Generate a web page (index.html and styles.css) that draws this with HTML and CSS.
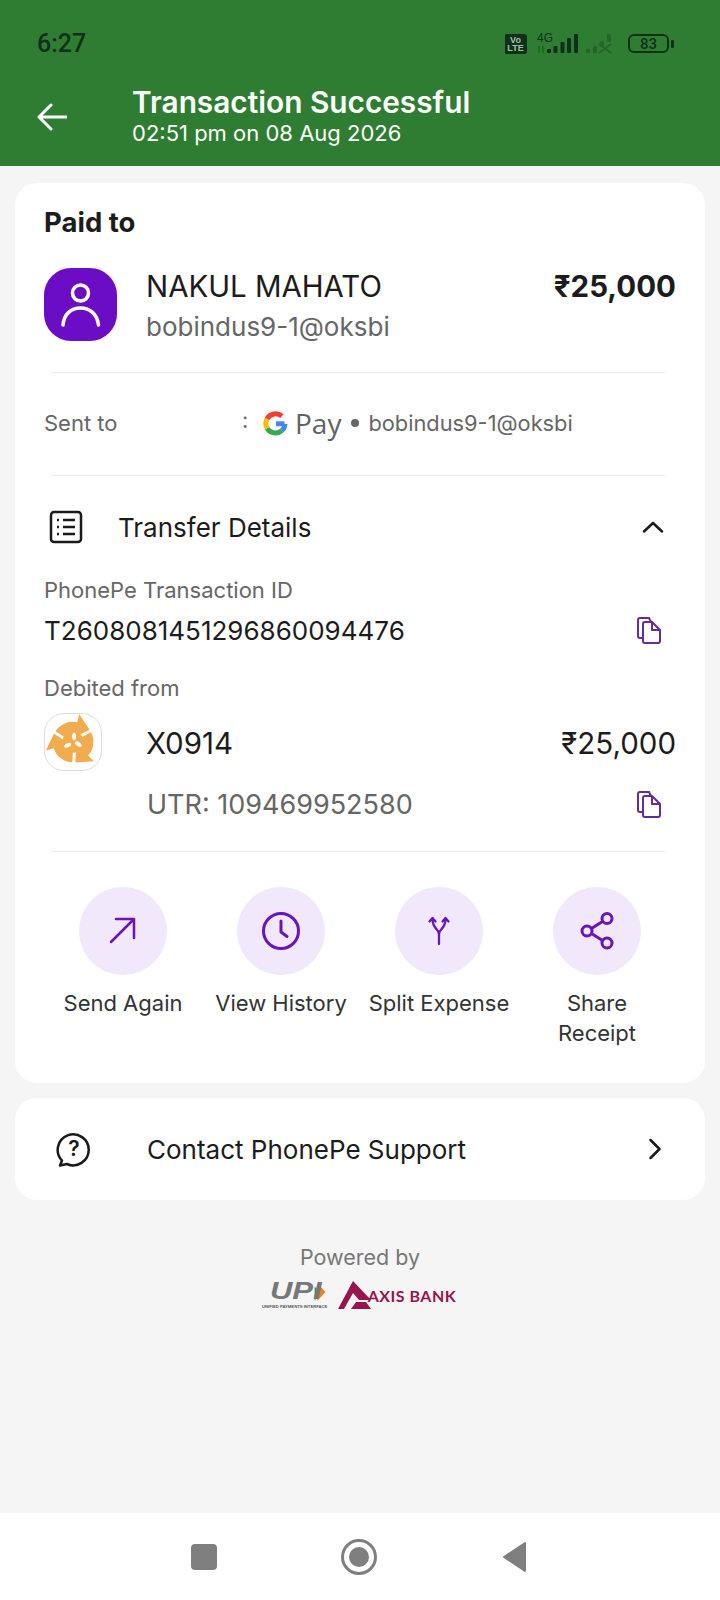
FILE: index.html
```html
<!DOCTYPE html>
<html lang="en">
<head>
    <meta charset="utf-8">
    <meta name="viewport" content="width=device-width, initial-scale=1">
    <title>Transaction Successful</title>
    <link rel="stylesheet" href="styles.css">
</head>
<body>
    <header class="top">
        <div class="status">
            <span class="time">6:27</span>
            <svg class="status-icons" width="170" height="24" viewBox="0 0 170 24">
                <rect x="-1" y="3" width="23" height="20" rx="3" fill="#10301a"/>
                <text x="10.500" y="11.500" class="volte">Vo</text>
                <text x="10.500" y="20" class="volte">LTE</text>
                <text x="32" y="11" class="net">4G</text>
                <g fill="#10301a">
                    <rect x="42" y="18" width="4" height="4" rx="1"/>
                    <rect x="48.500" y="15" width="4" height="7" rx="1"/>
                    <rect x="55.500" y="11" width="4" height="11" rx="1"/>
                    <rect x="62" y="7" width="4" height="15" rx="1"/>
                    <rect x="69" y="3" width="4" height="19" rx="1"/>
                </g>
                <g fill="#10301a" opacity="0.3">
                    <rect x="33" y="15" width="2" height="7"/>
                    <rect x="37" y="15" width="2" height="7"/>
                    <rect x="81" y="18" width="4" height="4" rx="1"/>
                    <rect x="88" y="15" width="4" height="7" rx="1"/>
                    <rect x="95" y="10" width="4" height="6" rx="1"/>
                    <rect x="102" y="3" width="4" height="8" rx="1"/>
                    <path d="M94 13l12 9M106 13l-12 9" stroke="#10301a" stroke-width="2"/>
                </g>
                <rect x="124" y="4" width="39" height="17" rx="5" fill="none" stroke="#10301a" stroke-width="2"/>
                <rect x="166" y="9" width="3" height="8" rx="1" fill="#10301a"/>
                <text x="143.500" y="18" class="level">83</text>
            </svg>
        </div>
        <div class="appbar">
            <svg class="back" width="30" height="28" viewBox="0 0 30 28">
                <path d="M29 14H2M14 2L2 14l12 12" fill="none" stroke="#fff" stroke-width="3" stroke-linecap="round" stroke-linejoin="round"/>
            </svg>
            <div>
                <div class="title">Transaction Successful</div>
                <div class="subtitle">02:51 pm on 08 Aug 2026</div>
            </div>
        </div>
    </header>

    <main class="content">
        <section class="card">
            <h2 class="paid-to">Paid to</h2>

            <div class="payee">
                <div class="avatar">
                    <svg width="73" height="73" viewBox="0 0 73 73">
                        <circle cx="36.500" cy="25" r="8" fill="none" stroke="#fff" stroke-width="3.500"/>
                        <path d="M19 57c1-11 8-17 17.500-17S53 46 54.500 57" fill="none" stroke="#fff" stroke-width="3.500" stroke-linecap="round"/>
                    </svg>
                </div>
                <div class="payee-info">
                    <div class="name">NAKUL MAHATO</div>
                    <div class="handle">bobindus9-1@oksbi</div>
                </div>
                <div class="amount">₹25,000</div>
            </div>

            <hr class="line line-payee">

            <div class="sent">
                <span class="sent-label">Sent to</span>
                <span class="colon">:</span>
                <svg class="g-logo" width="27" height="27" viewBox="0 0 27 27">
                    <path d="M22.500 13.800H14" fill="none" stroke="#4285f4" stroke-width="5"/>
                    <path d="M23 13.800a9.800 9.800 0 0 1-3.200 6.800" fill="none" stroke="#4285f4" stroke-width="5"/>
                    <path d="M19.800 20.600A9.800 9.800 0 0 1 5 18.200" fill="none" stroke="#34a853" stroke-width="5"/>
                    <path d="M5 18.200a9.800 9.800 0 0 1 0-9.400" fill="none" stroke="#fbbc05" stroke-width="5"/>
                    <path d="M5 8.800A9.800 9.800 0 0 1 20 6.200" fill="none" stroke="#ea4335" stroke-width="5"/>
                </svg>
                <span class="pay">Pay</span>
                <span class="dot"></span>
                <span class="sent-handle">bobindus9-1@oksbi</span>
            </div>

            <hr class="line line-sent">

            <div class="details-head">
                <svg class="details-icon" width="34" height="34" viewBox="0 0 34 34">
                    <rect x="2" y="2" width="30" height="30" rx="3" fill="none" stroke="#1a1a1a" stroke-width="2.500"/>
                    <path d="M14 10h12M14 17h12M14 24h12M8 10h2M8 17h2M8 24h2" stroke="#1a1a1a" stroke-width="2.500"/>
                </svg>
                <span class="details-title">Transfer Details</span>
                <svg class="chevron" width="22" height="12" viewBox="0 0 22 12">
                    <path d="M2 10.500l9-8.500 9 8.500" fill="none" stroke="#1a1a1a" stroke-width="2.500" stroke-linecap="round" stroke-linejoin="round"/>
                </svg>
            </div>

            <div class="label label-txn">PhonePe Transaction ID</div>
            <div class="row row-txn">
                <span class="txn-id">T2608081451296860094476</span>
                <svg class="copy" width="24" height="27" viewBox="0 0 24 27">
                    <path d="M6 21H3a2 2 0 0 1-2-2V3a2 2 0 0 1 2-2h9l2 4" fill="none" stroke="#5f2d9e" stroke-width="2"/>
                    <path d="M6 7a2 2 0 0 1 2-2h7l8 8v11a2 2 0 0 1-2 2H8a2 2 0 0 1-2-2zM15 5v8h8" fill="none" stroke="#5f2d9e" stroke-width="2" stroke-linejoin="round"/>
                </svg>
            </div>

            <div class="label label-debit">Debited from</div>
            <div class="bank">
                <div class="bank-logo">
                    <svg width="56" height="56" viewBox="4 4 52 52">
                        <defs>
                            <g id="swirl">
                                <path d="M20.500 21A13 13 0 0 1 35.500 18.500" fill="none" stroke="#f0ac4e" stroke-width="12"/>
                                <path d="M41 6L31 26.500 47.500 22z" fill="#f0ac4e"/>
                            </g>
                        </defs>
                        <circle cx="30" cy="30" r="10" fill="#f0ac4e"/>
                        <use href="#swirl" transform="rotate(-12 30 30)"/>
                        <use href="#swirl" transform="rotate(108 30 30)"/>
                        <use href="#swirl" transform="rotate(228 30 30)"/>
                        <g fill="#fff">
                            <ellipse cx="31" cy="25" rx="1.800" ry="3.500"/>
                            <ellipse cx="25" cy="33" rx="3.500" ry="1.800" transform="rotate(-25 25 33)"/>
                            <ellipse cx="35" cy="32" rx="3.500" ry="1.800" transform="rotate(35 35 32)"/>
                        </g>
                    </svg>
                </div>
                <span class="bank-acct">X0914</span>
                <span class="bank-amount">₹25,000</span>
            </div>
            <div class="row row-utr">
                <span class="utr">UTR: 109469952580</span>
                <svg class="copy" width="24" height="27" viewBox="0 0 24 27">
                    <path d="M6 21H3a2 2 0 0 1-2-2V3a2 2 0 0 1 2-2h9l2 4" fill="none" stroke="#5f2d9e" stroke-width="2"/>
                    <path d="M6 7a2 2 0 0 1 2-2h7l8 8v11a2 2 0 0 1-2 2H8a2 2 0 0 1-2-2zM15 5v8h8" fill="none" stroke="#5f2d9e" stroke-width="2" stroke-linejoin="round"/>
                </svg>
            </div>

            <hr class="line line-utr">

            <div class="actions">
                <div class="action">
                    <div class="action-circle">
                        <svg width="44" height="44" viewBox="0 0 44 44">
                            <path d="M10 33L33 10M15 10h18v19" fill="none" stroke="#6a14bd" stroke-width="2.500" stroke-linecap="round" stroke-linejoin="round"/>
                        </svg>
                    </div>
                    <span>Send Again</span>
                </div>
                <div class="action">
                    <div class="action-circle">
                        <svg width="44" height="44" viewBox="0 0 44 44">
                            <circle cx="22" cy="22" r="17.500" fill="none" stroke="#6a14bd" stroke-width="3"/>
                            <path d="M22 12v11l6 4.500" fill="none" stroke="#6a14bd" stroke-width="3" stroke-linecap="round" stroke-linejoin="round"/>
                        </svg>
                    </div>
                    <span>View History</span>
                </div>
                <div class="action">
                    <div class="action-circle">
                        <svg width="44" height="44" viewBox="0 0 44 44">
                            <path d="M22 35V25c0-5-6.500-5-6.500-15M22 25c0-5 6.500-5 6.500-15M12.500 12.500L15.500 9l3 3.500M25.500 12.500L28.500 9l3 3.500" fill="none" stroke="#6a14bd" stroke-width="2.300" stroke-linecap="round" stroke-linejoin="round"/>
                        </svg>
                    </div>
                    <span>Split Expense</span>
                </div>
                <div class="action">
                    <div class="action-circle">
                        <svg width="44" height="44" viewBox="0 0 44 44">
                            <circle cx="32" cy="9.500" r="5" fill="none" stroke="#6a14bd" stroke-width="3"/>
                            <circle cx="12" cy="22" r="5" fill="none" stroke="#6a14bd" stroke-width="3"/>
                            <circle cx="32" cy="34" r="5" fill="none" stroke="#6a14bd" stroke-width="3"/>
                            <path d="M16.500 19.500l11-7M16.500 24.500l11 7" stroke="#6a14bd" stroke-width="3"/>
                        </svg>
                    </div>
                    <span>Share<br>Receipt</span>
                </div>
            </div>
        </section>

        <section class="card support">
            <svg class="help" width="36" height="36" viewBox="0 0 36 36">
                <path d="M6 29.500a15.500 15.500 0 1 1 5 3.500l-7 1.500z" fill="none" stroke="#1a1a1a" stroke-width="2.500" stroke-linejoin="round"/>
                <text x="18" y="25" class="help-mark">?</text>
            </svg>
            <span class="support-text">Contact PhonePe Support</span>
            <svg class="chevron" width="14" height="22" viewBox="0 0 14 22">
                <path d="M2.500 2l9 9-9 9" fill="none" stroke="#1a1a1a" stroke-width="2.500" stroke-linecap="round" stroke-linejoin="round"/>
            </svg>
        </section>

        <div class="powered">
            <div class="powered-text">Powered by</div>
            <div class="brands">
                <div class="upi">
                    <div class="upi-top">
                        <span class="upi-word">UPI</span>
                        <svg class="upi-arrows" width="12" height="18" viewBox="0 0 12 20">
                            <path d="M3 0l9 10-9 10z" fill="#e8842a"/>
                            <path d="M0 4l6 6-6 10z" fill="#3f9a49"/>
                        </svg>
                    </div>
                    <div class="upi-sub">UNIFIED PAYMENTS INTERFACE</div>
                </div>
                <svg class="axis-mark" width="33" height="28" viewBox="0 0 33 28">
                    <path d="M0 28L15 0l18 19H21L15 12 6 28z" fill="#97144d"/>
                    <path d="M13 28l5-7h10l5 7z" fill="#97144d"/>
                </svg>
                <span class="axis-word">AXIS BANK</span>
            </div>
        </div>
    </main>

    <nav class="navbar">
        <span class="nav-square"></span>
        <span class="nav-home"><span></span></span>
        <svg class="nav-back" width="25" height="32" viewBox="0 0 25 32">
            <path d="M23 2L2 16l21 14z" fill="#7f7f7f" stroke="#7f7f7f" stroke-width="2" stroke-linejoin="round"/>
        </svg>
    </nav>
</body>
</html>
```

FILE: styles.css
```css
* {
    box-sizing: border-box;
}
body {
    margin: 0;
    width: 720px;
    height: 1600px;
    display: flex;
    flex-direction: column;
    font-family: Inter, "Noto Sans", sans-serif;
    background-color: #f5f5f5;
    color: #1c1c1c;
    overflow: hidden;
}

/* green header */
.top {
    height: 166px;
    background: #2f7d32;
    flex: none;
}
.status {
    height: 86px;
    padding: 0 45px 0 37px;
    display: flex;
    align-items: center;
    justify-content: space-between;
}
.time {
    font-family: Roboto, sans-serif;
    font-size: 25px;
    font-weight: 500;
    color: #10301a;
}
.volte {
    font: 700 9px "Liberation Sans", sans-serif;
    fill: #9fc4a3;
    text-anchor: middle;
}
.net {
    font: 500 12px "Liberation Sans", sans-serif;
    fill: #10301a;
}
.level {
    font: 500 15px Roboto, sans-serif;
    fill: #10301a;
    text-anchor: middle;
}
.appbar {
    display: flex;
    align-items: center;
    padding-left: 37px;
    height: 62px;
    color: white;
}
.back {
    margin-right: 65px;
    flex: none;
}
.title {
    margin-top: -1px;
    font-size: 29.800px;
    font-weight: 600;
    line-height: 34px;
}
.subtitle {
    font-size: 22px;
    line-height: 29px;
}

/* cards */
.content {
    flex: 1;
    padding: 17px 15px 0;
}
.card {
    background: white;
    border-radius: 22px;
    padding: 22px 29px 35px 29px;
}
.paid-to {
    margin: 0;
    font-size: 27.500px;
    font-weight: 700;
    line-height: 34px;
}
.payee {
    margin-top: 29px;
    height: 77px;
    display: flex;
}
.avatar {
    width: 73px;
    height: 73px;
    background: #6a0dc4;
    border-radius: 27px;
    flex: none;
}
.payee-info {
    margin-left: 29px;
    flex: 1;
}
.name {
    padding-top: 1px;
    font-size: 29.400px;
    line-height: 36px;
}
.handle {
    margin-top: 4px;
    font-size: 26px;
    line-height: 36px;
    color: #666;
}
.amount {
    font-size: 29.500px;
    font-weight: 700;
    line-height: 36px;
}
.line {
    border: none;
    height: 1px;
    background: #e9e9e9;
    margin: 0 11px 0 8px;
}
.line-payee {
    margin-top: 27px;
}
.sent {
    margin-top: 35px;
    height: 30px;
    display: flex;
    align-items: center;
    color: #666;
}
.sent-label {
    width: 198px;
    font-size: 22px;
}
.colon {
    width: 20px;
    font-size: 22px;
    position: relative;
    top: -3px;
}
.g-logo {
    flex: none;
}
.pay {
    margin-left: 6px;
    font-family: "Open Sans", sans-serif;
    font-size: 28px;
    color: #5f6368;
}
.dot {
    width: 8px;
    height: 8px;
    margin: 0 9px 0 10px;
    background: #666;
    border-radius: 50%;
}
.sent-handle {
    font-size: 21.800px;
}
.line-sent {
    margin-top: 37px;
}
.details-head {
    margin-top: 34px;
    display: flex;
    align-items: center;
    height: 34px;
}
.details-icon {
    margin-left: 5px;
    flex: none;
}
.details-title {
    margin-left: 35px;
    flex: 1;
    font-size: 26px;
}
.details-head .chevron {
    margin-right: 12px;
}
.label {
    font-size: 22px;
    line-height: 28px;
    color: #666;
}
.label-txn {
    margin-top: 32px;
}
.row {
    display: flex;
    align-items: center;
    justify-content: space-between;
    height: 32px;
}
.row-txn {
    margin-top: 10px;
}
.txn-id {
    font-size: 26px;
}
.copy {
    margin-right: 15px;
    flex: none;
}
.label-debit {
    margin-top: 28px;
}
.bank {
    margin-top: 11px;
    display: flex;
    align-items: center;
    height: 58px;
}
.bank-logo {
    width: 58px;
    height: 58px;
    border: 1px solid #ddd;
    border-radius: 20px;
    flex: none;
}
.bank-acct {
    margin-left: 44px;
    padding-top: 2px;
    flex: 1;
    font-size: 29.500px;
}
.bank-amount {
    padding-top: 2px;
    font-size: 29.500px;
}
.row-utr {
    margin-top: 17px;
    padding-left: 103px;
}
.utr {
    font-size: 27px;
    color: #666;
}
.line-utr {
    margin-top: 31px;
}

/* quick actions */
.actions {
    margin-top: 35px;
    display: grid;
    grid-template-columns: repeat(4, 158px);
}
.action {
    display: flex;
    flex-direction: column;
    align-items: center;
    text-align: center;
    font-size: 22px;
    line-height: 30px;
    color: #333;
}
.action-circle {
    width: 88px;
    height: 88px;
    margin-bottom: 13px;
    background: #f1e8fb;
    border-radius: 50%;
    display: flex;
    align-items: center;
    justify-content: center;
}
.support {
    margin-top: 15px;
    height: 102px;
    padding: 0 43px 0 41px;
    display: flex;
    align-items: center;
}
.help {
    flex: none;
}
.help-mark {
    font: 600 21px Inter, sans-serif;
    fill: #1a1a1a;
    text-anchor: middle;
}
.support-text {
    margin-left: 55px;
    flex: 1;
    font-size: 26px;
}

/* footer logos */
.powered {
    margin-top: 42px;
    text-align: center;
}
.powered-text {
    font-size: 21.500px;
    line-height: 30px;
    color: #777;
}
.brands {
    margin-top: 9px;
    padding-right: 4px;
    display: flex;
    justify-content: center;
    align-items: center;
}
.upi {
    width: 70px;
    margin-right: 8px;
}
.upi-top {
    display: flex;
    align-items: center;
    height: 20px;
}
.upi-word {
    font: italic 700 23px "Liberation Sans", sans-serif;
    color: #777;
    display: inline-block;
    width: 56px;
    margin-left: -2px;
    transform: scaleX(1.350);
    transform-origin: left center;
}
.upi-sub {
    font: 700 4.200px "Liberation Sans", sans-serif;
    white-space: nowrap;
    color: #555;
    margin-top: 2px;
}
.axis-mark {
    flex: none;
}
.axis-word {
    margin-left: -3px;
    font-family: Lato, sans-serif;
    font-size: 16px;
    font-weight: 700;
    letter-spacing: 0.5px;
    color: #97144d;
    white-space: nowrap;
}

/* system navigation */
.navbar {
    height: 87px;
    flex: none;
    background: white;
    display: flex;
    align-items: center;
    padding-left: 191px;
}
.nav-square {
    width: 26px;
    height: 26px;
    background: #7f7f7f;
    border-radius: 4px;
}
.nav-home {
    width: 36px;
    height: 36px;
    margin-left: 124px;
    border: 3.500px solid #7f7f7f;
    border-radius: 50%;
    display: flex;
    align-items: center;
    justify-content: center;
}
.nav-home span {
    width: 20px;
    height: 20px;
    background: #7f7f7f;
    border-radius: 50%;
}
.nav-back {
    margin-left: 125px;
}
```
